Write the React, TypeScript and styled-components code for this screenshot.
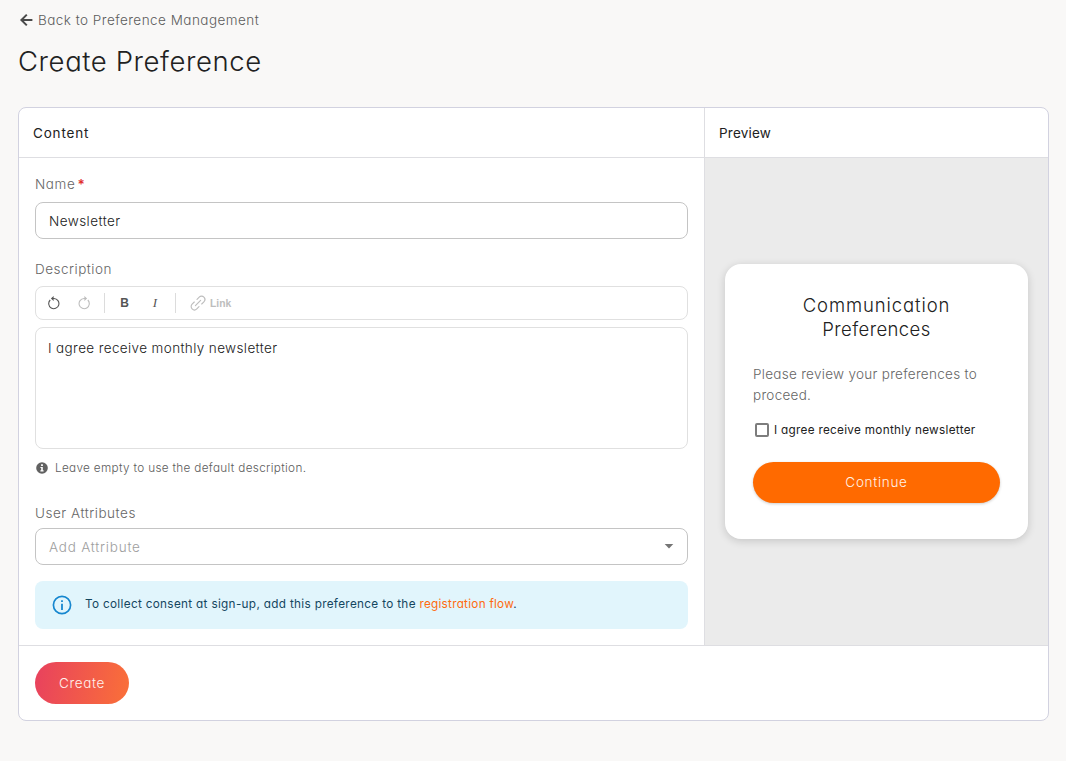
import React from "react";
import styled, { createGlobalStyle } from "styled-components";

const GlobalStyle = createGlobalStyle`
  *, *::before, *::after { box-sizing: border-box; }
  body {
    margin: 0;
    background: #f9f8f7;
    color: #212121;
    font-family: Inter, "Open Sans", sans-serif;
    font-feature-settings: "cv11" 1;
    font-size: 13.5px;
    font-weight: 350;
    -webkit-font-smoothing: antialiased;
  }
  button, input { font: inherit; font-feature-settings: inherit; }
  svg { display: block; flex: none; }
`;

const Page = styled.main`
  width: 1066px;
  height: 761px;
  padding: 10px 17px 0 18px;
`;

const BackLink = styled.a`
  display: flex;
  align-items: center;
  gap: 3px;
  height: 20px;
  padding-left: 1px;
  color: #5c5c5c;
`;

const Title = styled.h1`
  margin: 13px 0 28px;
  height: 36px;
  font-size: 27.5px;
  line-height: 36px;
  font-weight: 350;
`;

const Card = styled.section`
  height: 614px;
  display: flex;
  flex-direction: column;
  background: #fff;
  border: 1px solid #d2d2e0;
  border-radius: 8px;
  overflow: hidden;
`;

const Columns = styled.div`
  height: 538px;
  display: grid;
  grid-template-columns: 686px 1fr;
  border-bottom: 1px solid #dedee2;
`;

const Column = styled.div<{ $divided?: boolean }>`
  display: flex;
  flex-direction: column;
  border-right: ${(p) => (p.$divided ? "1px solid #dedee2" : "0")};
`;

const ColumnHeader = styled.h2`
  margin: 0;
  height: 50px;
  padding: 0 14px;
  display: flex;
  align-items: center;
  border-bottom: 1px solid #dedee2;
  font-size: 13.5px;
  font-weight: 370;
`;

const Form = styled.form`
  padding: 16px 16px 0;
  display: flex;
  flex-direction: column;
`;

const Label = styled.label`
  height: 20px;
  line-height: 20px;
  color: #666;
`;

const Required = styled.span`
  color: #e02b2b;
  font-weight: 600;
  margin-left: 2px;
`;

const TextInput = styled.input`
  height: 37px;
  margin: 8px 0 20px;
  padding: 0 13px;
  border: 1px solid #c4c4c4;
  border-radius: 8px;
  background: #fff;
  color: #212121;
  letter-spacing: 0.45px;
  outline: none;
`;

const Toolbar = styled.div`
  display: flex;
  align-items: center;
  height: 34px;
  margin: 7px 0;
  padding-left: 12px;
  border: 1px solid #e0e0e0;
  border-radius: 8px;
`;

const Tool = styled.span<{ $width: number; $muted?: boolean }>`
  width: ${(p) => p.$width}px;
  display: flex;
  align-items: center;
  color: ${(p) => (p.$muted ? "#bdbdbd" : "#555")};
`;

const ToolDivider = styled.span`
  width: 1px;
  height: 20px;
  background: #dcdcdc;
`;

const BoldMark = styled.b`
  width: 100%;
  text-align: center;
  font-family: "Liberation Sans", sans-serif;
  font-size: 12px;
  font-weight: 700;
`;

const ItalicMark = styled.i`
  width: 100%;
  text-align: center;
  font-family: "Liberation Serif", serif;
  font-size: 13px;
  font-weight: 400;
`;

const LinkLabel = styled.span`
  margin-left: 4px;
  font-family: "Liberation Sans", sans-serif;
  font-size: 10.3px;
  font-weight: 700;
`;

const Editor = styled.div`
  height: 122px;
  padding: 10px 12px;
  border: 1px solid #e0e0e0;
  border-radius: 8px;
  line-height: 20px;
`;

const Hint = styled.p`
  margin: 10px 0 26px;
  height: 18px;
  padding-left: 1px;
  display: flex;
  align-items: center;
  gap: 7px;
  color: #5c5c5c;
  font-size: 11.75px;
`;

const Select = styled.div`
  height: 37px;
  margin: 5px 0 16px;
  padding: 0 13px;
  display: flex;
  align-items: center;
  justify-content: space-between;
  border: 1px solid #c4c4c4;
  border-radius: 8px;
  color: #9e9e9e;
`;

const Notice = styled.div`
  height: 48px;
  padding-left: 17px;
  display: flex;
  align-items: center;
  gap: 13px;
  border-radius: 8px;
  background: #e1f5fc;
  color: #14465f;
  font-size: 11.75px;
  font-weight: 370;
`;

const NoticeText = styled.span`
  padding-bottom: 3px;
  white-space: nowrap;
`;

const InlineLink = styled.a`
  color: #ff6b0f;
`;

const PreviewArea = styled.div`
  flex: 1;
  display: flex;
  justify-content: center;
  align-items: center;
  background: #ebebeb;
`;

const PreviewCard = styled.article`
  width: 303px;
  height: 275px;
  padding: 29px 28px 0;
  display: flex;
  flex-direction: column;
  background: #fff;
  border-radius: 16px;
  box-shadow: 0 2px 8px rgba(0, 0, 0, 0.16);
`;

const PreviewTitle = styled.h3`
  margin: 0 0 23px;
  font-size: 18.5px;
  line-height: 24px;
  font-weight: 350;
  text-align: center;
`;

const PreviewText = styled.p`
  margin: 0;
  line-height: 21px;
  color: #666;
`;

const Consent = styled.label`
  height: 20px;
  margin: 14px 0 22px;
  padding-left: 2px;
  display: flex;
  align-items: center;
  gap: 5px;
  font-size: 11.75px;
  font-weight: 370;
  white-space: nowrap;
`;

const CheckBox = styled.span`
  width: 14px;
  height: 14px;
  flex: none;
  border: 2px solid #7d7d7d;
  border-radius: 2px;
`;

const ContinueButton = styled.button`
  height: 41px;
  padding: 0 0 1px;
  border: 0;
  border-radius: 21px;
  background: #ff6a00;
  color: #fff2e8;
  box-shadow: 0 1px 3px rgba(0, 0, 0, 0.2);
`;

const Footer = styled.footer`
  padding: 16px;
`;

const CreateButton = styled.button`
  display: block;
  width: 94px;
  height: 42px;
  padding: 0 0 1px;
  border: 0;
  border-radius: 21px;
  background: linear-gradient(100deg, #e8415e, #fa7038);
  color: #fff2ee;
`;

const Fit = styled.span<{ $track: number }>`
  letter-spacing: ${(p) => p.$track}px;
`;

const ArrowIcon = () => (
  <svg width="16" height="16" viewBox="0 0 16 16" fill="none" stroke="#4a4a4a" strokeWidth="2">
    <path d="M13.4 8H2.5M7.8 2.6 2.4 8l5.4 5.4" />
  </svg>
);

const RotateIcon = ({ flipped }: { flipped?: boolean }) => (
  <svg width="12" height="14" viewBox="0 0 12 14" fill="none" stroke="currentColor" strokeWidth="1.1">
    <g transform={flipped ? "translate(12 0) scale(-1 1)" : undefined}>
      <path d="M2.2 4A5.1 5.1 0 1 0 6 2.5H4" />
      <path d="M5.7 0.6 3.7 2.5l2 1.9" />
    </g>
  </svg>
);

const ChainIcon = () => (
  <svg width="16" height="16" viewBox="0 0 16 16" fill="none" stroke="currentColor" strokeWidth="1.1" strokeLinecap="round">
    <path d="M5.4 10.6l5.2-5.2M7 4.3l2.2-2.2a3.3 3.3 0 0 1 4.7 4.7L11.7 9M9 11.7l-2.2 2.2a3.3 3.3 0 0 1-4.7-4.7L4.3 7" />
  </svg>
);

const HintIcon = () => (
  <svg width="12" height="12" viewBox="0 0 12 12">
    <circle cx="6" cy="6" r="5.8" fill="#616161" />
    <path d="M5.1 2.3h1.8v1.6H5.1zM4.4 4.9h2.4v3.4h.8v1.1H4.4V8.3h.8V6h-.8z" fill="#fff" />
  </svg>
);

const NoticeIcon = () => (
  <svg width="20" height="20" viewBox="0 0 20 20">
    <circle cx="10" cy="10" r="8.6" fill="none" stroke="#1787cf" strokeWidth="1.7" />
    <path d="M9.1 5.2h1.8V7H9.1zM9.1 8.7h1.8V15H9.1z" fill="#1787cf" />
  </svg>
);

const Caret = () => (
  <svg width="10" height="5" viewBox="0 0 10 5">
    <path d="M0.7 0h8.6L5 4.6z" fill="#757575" />
  </svg>
);

export default function App() {
  return (
    <>
      <GlobalStyle />
      <Page>
        <BackLink><ArrowIcon /><Fit $track={0.47}>Back to Preference Management</Fit></BackLink>
        <Title><Fit $track={0.58}>Create Preference</Fit></Title>
        <Card>
          <Columns>
            <Column $divided>
              <ColumnHeader><Fit $track={0.82}>Content</Fit></ColumnHeader>
              <Form>
                <Label><Fit $track={0.6}>Name</Fit><Required>*</Required></Label>
                <TextInput defaultValue="Newsletter" />
                <Label><Fit $track={0.5}>Description</Fit></Label>
                <Toolbar>
                  <Tool $width={30}><RotateIcon /></Tool>
                  <Tool $width={26} $muted><RotateIcon flipped /></Tool>
                  <ToolDivider />
                  <Tool $width={39}><BoldMark>B</BoldMark></Tool>
                  <Tool $width={22}><ItalicMark>I</ItalicMark></Tool>
                  <Tool $width={9} />
                  <ToolDivider />
                  <Tool $width={14} />
                  <Tool $width={60} $muted><ChainIcon /><LinkLabel>Link</LinkLabel></Tool>
                </Toolbar>
                <Editor><Fit $track={0.38}>I agree receive monthly newsletter</Fit></Editor>
                <Hint><HintIcon /><Fit $track={0.32}>Leave empty to use the default description.</Fit></Hint>
                <Label><Fit $track={0.53}>User Attributes</Fit></Label>
                <Select><Fit $track={0.77}>Add Attribute</Fit><Caret /></Select>
                <Notice>
                  <NoticeIcon />
                  <NoticeText>
                    <Fit $track={0.32}>To collect consent at sign-up, add this preference to the </Fit>
                    <Fit $track={0.26}><InlineLink>registration flow</InlineLink>.</Fit>
                  </NoticeText>
                </Notice>
              </Form>
            </Column>
            <Column>
              <ColumnHeader><Fit $track={0.2}>Preview</Fit></ColumnHeader>
              <PreviewArea>
                <PreviewCard>
                  <PreviewTitle><Fit $track={0.9}>Communication</Fit><br /><Fit $track={0.4}>Preferences</Fit></PreviewTitle>
                  <PreviewText><Fit $track={0.29}>Please review your preferences to<br />proceed.</Fit></PreviewText>
                  <Consent><CheckBox /><Fit $track={0.29}>I agree receive monthly newsletter</Fit></Consent>
                  <ContinueButton><Fit $track={0.7}>Continue</Fit></ContinueButton>
                </PreviewCard>
              </PreviewArea>
            </Column>
          </Columns>
          <Footer><CreateButton><Fit $track={0.67}>Create</Fit></CreateButton></Footer>
        </Card>
      </Page>
    </>
  );
}
